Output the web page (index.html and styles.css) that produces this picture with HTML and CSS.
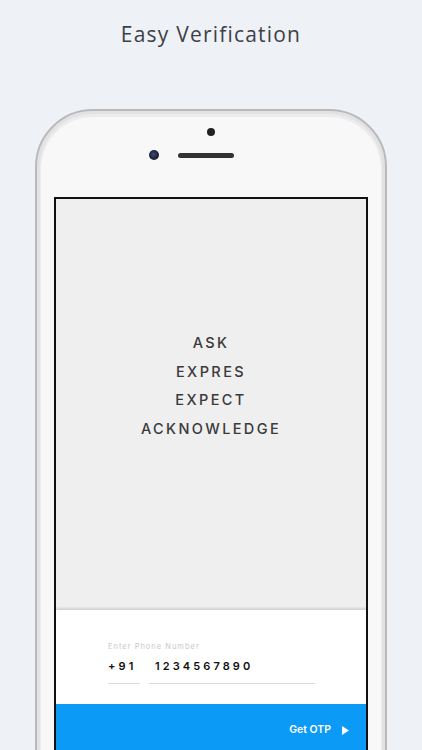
FILE: index.html
```html
<!DOCTYPE html>
<html>
<head>
<meta charset="utf-8">
<link rel="stylesheet" href="styles.css">
</head>
<body>
<div class="page">
  <h1 class="title">Easy Verification</h1>
  <div class="phone">
    <div class="phone-top">
      <span class="sensor"></span>
      <div class="cam-row">
        <span class="camera"></span>
        <span class="speaker"></span>
      </div>
    </div>
    <div class="screen">
      <div class="hero">
        <div class="word">ASK</div>
        <div class="word">EXPRES</div>
        <div class="word">EXPECT</div>
        <div class="word">ACKNOWLEDGE</div>
      </div>
      <div class="form">
        <div class="label">Enter Phone Number</div>
        <div class="fields">
          <div class="field code">+91</div>
          <div class="field number">1234567890</div>
        </div>
      </div>
      <div class="action">
        <span class="otp">Get OTP</span>
        <svg class="arrow" width="7" height="9" viewBox="0 0 7 9"><path d="M0 0 L7 4.5 L0 9 Z" fill="#fff"/></svg>
      </div>
    </div>
  </div>
</div>
</body>
</html>
```
FILE: styles.css
```css
html, body {
  margin: 0;
  padding: 0;
  background: #eef1f6;
}
.page {
  width: 422px;
  height: 750px;
  overflow: hidden;
  display: flex;
  flex-direction: column;
  align-items: center;
}
.title {
  margin: 19px 0 0 0;
  height: 90px;
  flex-shrink: 0;
  font-family: "Open Sans", sans-serif;
  font-weight: 400;
  font-size: 21px;
  letter-spacing: 1.2px;
  color: #3e4047;
  line-height: 30px;
}
.phone {
  width: 348px;
  height: 700px;
  border: 2px solid #b9b9bb;
  border-radius: 58px 58px 0 0;
  background: #f8f8f8;
  box-shadow: inset 0 0 0 3px #e2e2e4, inset 0 2px 0 4px #ececee;
  display: flex;
  flex-direction: column;
  align-items: center;
  flex-shrink: 0;
}
.phone-top {
  height: 86px;
  width: 100%;
  display: flex;
  flex-direction: column;
  align-items: center;
}
.sensor {
  width: 8px;
  height: 8px;
  border-radius: 50%;
  background: #222;
  margin-top: 17px;
}
.cam-row {
  width: 100%;
  display: flex;
  align-items: center;
  margin-top: 14px;
}
.camera {
  width: 10px;
  height: 10px;
  border-radius: 50%;
  background: radial-gradient(circle at 45% 45%, #3a4a7a 0, #1a1f33 60%, #111 100%);
  margin-left: 112px;
}
.speaker {
  width: 56px;
  height: 5px;
  border-radius: 3px;
  background: #333;
  margin-left: 19px;
}
.screen {
  width: 310px;
  flex: 1;
  border: 2px solid #111;
  border-bottom: none;
  background: #efefef;
  display: flex;
  flex-direction: column;
}
.hero {
  height: 411px;
  flex-shrink: 0;
  display: flex;
  flex-direction: column;
  align-items: center;
  justify-content: center;
  padding-bottom: 37px;
  box-sizing: border-box;
}
.word {
  font-family: "Inter", sans-serif;
  font-weight: 500;
  font-size: 14.5px;
  letter-spacing: 2.4px;
  color: #3a3a3a;
  line-height: 28.5px;
}
.form {
  height: 94px;
  flex-shrink: 0;
  background: #fff;
  box-shadow: 0 -2px 2px rgba(0,0,0,0.12);
  box-sizing: border-box;
  padding: 32px 0 0 52px;
}
.label {
  font-family: "Inter", sans-serif;
  font-size: 7.5px;
  letter-spacing: 1px;
  color: #c8c8c8;
  line-height: 10px;
}
.fields {
  display: flex;
  margin-top: 6px;
}
.field {
  font-family: "Inter", sans-serif;
  font-weight: 600;
  font-size: 11px;
  letter-spacing: 3.1px;
  color: #111;
  line-height: 16px;
  padding-bottom: 9px;
  border-bottom: 1px solid #dcdcdc;
}
.code {
  width: 32px;
}
.number {
  width: 166px;
  margin-left: 9px;
  padding-left: 6px;
  box-sizing: border-box;
}
.action {
  flex: 1;
  background: #0b9af5;
  display: flex;
  justify-content: flex-end;
  padding: 19px 17px 0 0;
  gap: 11px;
  align-items: flex-start;
}
.otp {
  font-family: "Inter", sans-serif;
  font-weight: 600;
  font-size: 10.5px;
  color: #fff;
  line-height: 14px;
}
.arrow {
  margin-top: 3px;
}
```
